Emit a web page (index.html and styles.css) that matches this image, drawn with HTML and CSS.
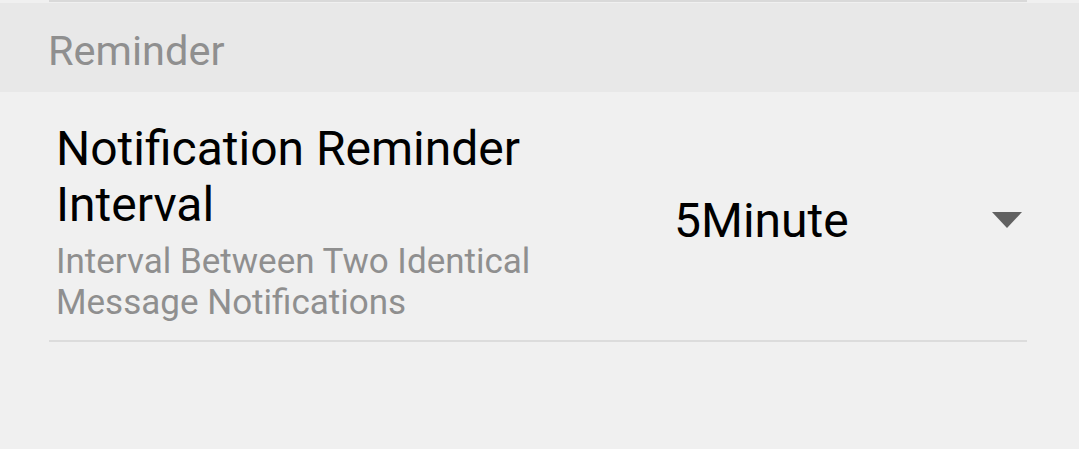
FILE: index.html
```html
<!DOCTYPE html>
<html lang="en">
<head>
  <meta charset="UTF-8">
  <title>Reminder Settings</title>
  <link rel="stylesheet" href="styles.css">
</head>
<body>

  <div class="garis-atas"></div>

  <div class="judul-grup">Reminder</div>

  <div class="isi">
    <div class="baris">
      <div class="teks">
        <div class="judul">Notification Reminder Interval</div>
        <div class="keterangan">Interval Between Two Identical Message Notifications</div>
      </div>
      <div class="pilihan">
        <span class="nilai">5Minute</span>
        <span class="panah"></span>
      </div>
    </div>
  </div>

</body>
</html>
```

FILE: styles.css
```css
body {
  font-family: Roboto, 'Noto Sans', sans-serif;
  background: #f0f0f0;
  margin: 0;
  padding: 0;
  width: 1079px;
  height: 449px;
  overflow: hidden;
}

.garis-atas {
  height: 3px;
  margin: 0 52px 0 49px;
  border-top: 2px solid #d9d9d9;
  box-sizing: border-box;
}

.judul-grup {
  background: #e8e8e8;
  color: #8f8f8f;
  font-size: 41.5px;
  height: 89px;
  line-height: 96px;
  padding-left: 48px;
}

.isi {
  margin: 0 52px 0 49px;
}

.baris {
  display: flex;
  align-items: center;
  height: 250px;
  border-bottom: 2px solid #dcdcdc;
  box-sizing: border-box;
}

.teks {
  width: 601px;
  padding-left: 7px;
  padding-top: 12px;
}

.judul {
  color: #000;
  font-size: 48px;
  line-height: 56px;
  width: 520px;
}

.keterangan {
  color: #8f8f8f;
  font-size: 35px;
  line-height: 41px;
  width: 520px;
  margin-top: 8px;
}

.pilihan {
  flex: 1;
  display: flex;
  align-items: center;
  justify-content: space-between;
  padding-left: 17px;
  padding-right: 5px;
  padding-top: 8px;
}

.nilai {
  color: #000;
  font-size: 48px;
}

.panah {
  width: 0;
  height: 0;
  border-left: 15px solid transparent;
  border-right: 15px solid transparent;
  border-top: 16px solid #616161;
}
```
